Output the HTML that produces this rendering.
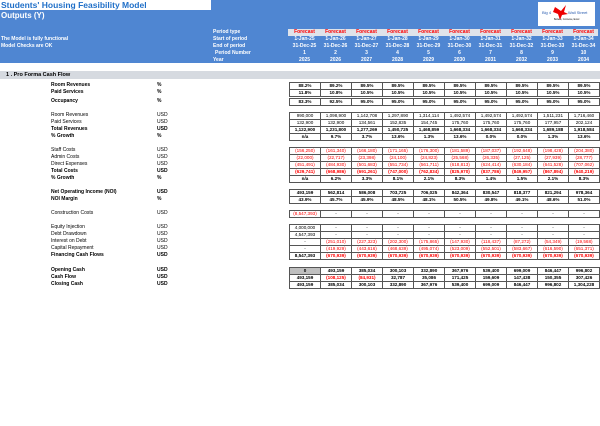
<!DOCTYPE html>
<html><head><meta charset="utf-8"><style>
*{margin:0;padding:0;box-sizing:border-box}
body{width:600px;height:426px;background:#fff;position:relative;overflow:hidden;font-family:"Liberation Sans",Arial,sans-serif;font-size:5px;color:#000}
.band{position:absolute;left:0;top:0;width:600px;height:63px;background:#4f86d2}
.t{position:absolute;white-space:nowrap}
.title{left:0;top:0;width:211px;height:10px;background:#fff;color:#1f6fc8;font-weight:bold;font-size:8.5px;line-height:10px;padding-left:1px}
.out{left:1px;top:11px;color:#fff;font-weight:bold;font-size:8px}
.w{color:#fff;font-weight:bold;font-size:5px;line-height:7px}
.fc{position:absolute;left:288px;top:29px;width:310px;height:7px;background:#dfe3ea}
.logo{position:absolute;left:538px;top:2px;width:57px;height:24px;background:#fff}
.bar{position:absolute;left:0;top:71px;width:600px;height:8px;background:#d6dae0;font-weight:bold;font-size:5.5px;line-height:8px;padding-left:6px}
.lb{position:absolute;left:51px;font-size:5px;line-height:7px}
.un{position:absolute;left:157px;font-size:5px;line-height:7px}
.b{font-weight:bold}
table{position:absolute;left:289px;border-collapse:collapse;border:1px solid #333}
td{width:31px;height:7px;border:0.6px solid #555;text-align:center;font-size:4.6px;line-height:6px;padding:0;font-weight:bold}
td.r{color:#f00}
tr.n td{font-weight:normal}
.hr{position:absolute;left:289px;display:flex;font-weight:bold;font-size:5px;line-height:7px;height:7px;color:#fff}
.hr span{width:31px;text-align:center;white-space:nowrap}
</style></head><body>
<div class="band"></div>
<div class="t title">Students' Housing Feasibility Model</div>
<div class="t out">Outputs (Y)</div>
<div class="t w" style="left:1px;top:36px">The Model is fully functional</div>
<div class="t w" style="left:1px;top:43px">Model Checks are OK</div>
<div class="t w" style="left:213px;top:29px">Period type</div>
<div class="t w" style="left:213px;top:36px">Start of period</div>
<div class="t w" style="left:213px;top:43px">End of period</div>
<div class="t w" style="left:215px;top:50px">Period Number</div>
<div class="t w" style="left:213px;top:57px">Year</div>
<div class="fc"></div>
<div class="logo"><svg width="57" height="24" viewBox="0 0 57 24"><text x="4" y="12" font-size="4" fill="#2a5db0" font-family="Liberation Sans">Big 4</text><path d="M17 5 L23 9 L28 3 L26 10 L30 12 L24 13 L22 18 L20 12 L15 10Z" fill="#e00"/><text x="30" y="12" font-size="4" fill="#2a5db0" font-family="Liberation Sans">Wall Street</text><text x="16" y="18" font-size="2.3" fill="#000" font-family="Liberation Sans">Believe, Conceive, Excel</text></svg></div>
<div class="hr" style="top:29px;color:#f00"><span>Forecast</span><span>Forecast</span><span>Forecast</span><span>Forecast</span><span>Forecast</span><span>Forecast</span><span>Forecast</span><span>Forecast</span><span>Forecast</span><span>Forecast</span></div>
<div class="hr" style="top:36px"><span>1-Jan-25</span><span>1-Jan-26</span><span>1-Jan-27</span><span>1-Jan-28</span><span>1-Jan-29</span><span>1-Jan-30</span><span>1-Jan-31</span><span>1-Jan-32</span><span>1-Jan-33</span><span>1-Jan-34</span></div>
<div class="hr" style="top:43px"><span>31-Dec-25</span><span>31-Dec-26</span><span>31-Dec-27</span><span>31-Dec-28</span><span>31-Dec-29</span><span>31-Dec-30</span><span>31-Dec-31</span><span>31-Dec-32</span><span>31-Dec-33</span><span>31-Dec-34</span></div>
<div class="hr" style="top:50px"><span>1</span><span>2</span><span>3</span><span>4</span><span>5</span><span>6</span><span>7</span><span>8</span><span>9</span><span>10</span></div>
<div class="hr" style="top:57px"><span>2025</span><span>2026</span><span>2027</span><span>2028</span><span>2029</span><span>2030</span><span>2031</span><span>2032</span><span>2033</span><span>2034</span></div>
<div class="bar">1 . Pro Forma Cash Flow</div>

<div class="lb b" style="top:82px">Room Revenues</div><div class="un b" style="top:82px">%</div>
<div class="lb b" style="top:89px">Paid Services</div><div class="un b" style="top:89px">%</div>
<div class="lb b" style="top:98px">Occupancy</div><div class="un b" style="top:98px">%</div>
<div class="lb" style="top:112px">Room Revenues</div><div class="un" style="top:112px">USD</div>
<div class="lb" style="top:119px">Paid Services</div><div class="un" style="top:119px">USD</div>
<div class="lb b" style="top:126px">Total Revenues</div><div class="un b" style="top:126px">USD</div>
<div class="lb b" style="top:133px">% Growth</div><div class="un b" style="top:133px">%</div>
<div class="lb" style="top:147px">Staff Costs</div><div class="un" style="top:147px">USD</div>
<div class="lb" style="top:154px">Admin Costs</div><div class="un" style="top:154px">USD</div>
<div class="lb" style="top:161px">Direct Expenses</div><div class="un" style="top:161px">USD</div>
<div class="lb b" style="top:168px">Total Costs</div><div class="un b" style="top:168px">USD</div>
<div class="lb b" style="top:175px">% Growth</div><div class="un b" style="top:175px">%</div>
<div class="lb b" style="top:189px">Net Operating Income (NOI)</div><div class="un b" style="top:189px">USD</div>
<div class="lb b" style="top:196px">NOI Margin</div><div class="un b" style="top:196px">%</div>
<div class="lb" style="top:210px">Construction Costs</div><div class="un" style="top:210px">USD</div>
<div class="lb" style="top:224px">Equity Injection</div><div class="un" style="top:224px">USD</div>
<div class="lb" style="top:231px">Debt Drawdown</div><div class="un" style="top:231px">USD</div>
<div class="lb" style="top:238px">Interest on Debt</div><div class="un" style="top:238px">USD</div>
<div class="lb" style="top:245px">Capital Repayment</div><div class="un" style="top:245px">USD</div>
<div class="lb b" style="top:252px">Financing Cash Flows</div><div class="un b" style="top:252px">USD</div>
<div class="lb b" style="top:267px">Opening Cash</div><div class="un b" style="top:267px">USD</div>
<div class="lb b" style="top:274px">Cash Flow</div><div class="un b" style="top:274px">USD</div>
<div class="lb b" style="top:281px">Closing Cash</div><div class="un b" style="top:281px">USD</div>

<table style="top:82px">
<tr><td>88.2%</td><td>89.2%</td><td>89.5%</td><td>89.5%</td><td>89.5%</td><td>89.5%</td><td>89.5%</td><td>89.5%</td><td>89.5%</td><td>89.5%</td></tr>
<tr><td>11.8%</td><td>10.8%</td><td>10.5%</td><td>10.5%</td><td>10.5%</td><td>10.5%</td><td>10.5%</td><td>10.5%</td><td>10.5%</td><td>10.5%</td></tr>
</table>
<table style="top:98px">
<tr><td>83.3%</td><td>92.5%</td><td>95.0%</td><td>95.0%</td><td>95.0%</td><td>95.0%</td><td>95.0%</td><td>95.0%</td><td>95.0%</td><td>95.0%</td></tr>
</table>
<table style="top:112px">
<tr class="n"><td>990,000</td><td>1,098,900</td><td>1,142,708</td><td>1,297,890</td><td>1,314,114</td><td>1,492,574</td><td>1,492,574</td><td>1,492,574</td><td>1,511,231</td><td>1,716,460</td></tr>
<tr class="n"><td>132,900</td><td>132,900</td><td>134,561</td><td>152,835</td><td>154,745</td><td>175,760</td><td>175,760</td><td>175,760</td><td>177,957</td><td>202,124</td></tr>
<tr><td>1,122,900</td><td>1,231,800</td><td>1,277,269</td><td>1,450,725</td><td>1,468,859</td><td>1,668,334</td><td>1,668,334</td><td>1,668,334</td><td>1,689,188</td><td>1,918,584</td></tr>
<tr><td>n/a</td><td>9.7%</td><td>3.7%</td><td>13.6%</td><td>1.3%</td><td>13.6%</td><td>0.0%</td><td>0.0%</td><td>1.3%</td><td>13.6%</td></tr>
</table>
<table style="top:147px">
<tr class="n"><td class="r">(156,250)</td><td class="r">(161,340)</td><td class="r">(166,180)</td><td class="r">(171,165)</td><td class="r">(176,300)</td><td class="r">(181,589)</td><td class="r">(187,037)</td><td class="r">(192,648)</td><td class="r">(198,428)</td><td class="r">(204,380)</td></tr>
<tr class="n"><td class="r">(22,000)</td><td class="r">(22,717)</td><td class="r">(23,398)</td><td class="r">(24,100)</td><td class="r">(24,823)</td><td class="r">(25,568)</td><td class="r">(26,335)</td><td class="r">(27,125)</td><td class="r">(27,939)</td><td class="r">(28,777)</td></tr>
<tr class="n"><td class="r">(451,491)</td><td class="r">(484,930)</td><td class="r">(501,683)</td><td class="r">(551,734)</td><td class="r">(561,711)</td><td class="r">(618,813)</td><td class="r">(624,414)</td><td class="r">(630,184)</td><td class="r">(641,528)</td><td class="r">(707,062)</td></tr>
<tr><td class="r">(629,741)</td><td class="r">(668,986)</td><td class="r">(691,261)</td><td class="r">(747,000)</td><td class="r">(762,834)</td><td class="r">(825,970)</td><td class="r">(837,786)</td><td class="r">(849,957)</td><td class="r">(867,894)</td><td class="r">(940,219)</td></tr>
<tr><td>n/a</td><td>6.2%</td><td>3.3%</td><td>8.1%</td><td>2.1%</td><td>8.3%</td><td>1.4%</td><td>1.5%</td><td>2.1%</td><td>8.3%</td></tr>
</table>
<table style="top:189px">
<tr><td>493,159</td><td>562,814</td><td>586,008</td><td>703,725</td><td>706,025</td><td>842,364</td><td>830,547</td><td>818,377</td><td>821,294</td><td>978,364</td></tr>
<tr><td>43.9%</td><td>45.7%</td><td>45.9%</td><td>48.5%</td><td>48.1%</td><td>50.5%</td><td>49.8%</td><td>49.1%</td><td>48.6%</td><td>51.0%</td></tr>
</table>
<table style="top:210px">
<tr class="n"><td class="r">(8,547,393)</td><td>-</td><td>-</td><td>-</td><td>-</td><td>-</td><td>-</td><td>-</td><td>-</td><td>-</td></tr>
</table>
<table style="top:224px">
<tr class="n"><td>4,000,000</td><td>-</td><td>-</td><td>-</td><td>-</td><td>-</td><td>-</td><td>-</td><td>-</td><td>-</td></tr>
<tr class="n"><td>4,547,393</td><td>-</td><td>-</td><td>-</td><td>-</td><td>-</td><td>-</td><td>-</td><td>-</td><td>-</td></tr>
<tr class="n"><td>-</td><td class="r">(251,010)</td><td class="r">(227,323)</td><td class="r">(202,300)</td><td class="r">(175,865)</td><td class="r">(147,930)</td><td class="r">(118,437)</td><td class="r">(87,272)</td><td class="r">(54,349)</td><td class="r">(19,568)</td></tr>
<tr class="n"><td>-</td><td class="r">(419,929)</td><td class="r">(443,616)</td><td class="r">(468,639)</td><td class="r">(495,074)</td><td class="r">(523,009)</td><td class="r">(552,501)</td><td class="r">(583,667)</td><td class="r">(616,590)</td><td class="r">(651,371)</td></tr>
<tr><td>8,547,393</td><td class="r">(670,939)</td><td class="r">(670,939)</td><td class="r">(670,939)</td><td class="r">(670,939)</td><td class="r">(670,939)</td><td class="r">(670,939)</td><td class="r">(670,939)</td><td class="r">(670,939)</td><td class="r">(670,939)</td></tr>
</table>
<table style="top:267px">
<tr><td style="background:#bfbfbf">0</td><td>493,159</td><td>385,034</td><td>300,103</td><td>332,890</td><td>367,976</td><td>539,400</td><td>699,009</td><td>846,447</td><td>996,802</td></tr>
<tr><td>493,159</td><td class="r">(108,125)</td><td class="r">(84,931)</td><td>32,787</td><td>35,086</td><td>171,425</td><td>159,609</td><td>147,438</td><td>150,355</td><td>307,426</td></tr>
<tr><td>493,159</td><td>385,034</td><td>300,103</td><td>332,890</td><td>367,976</td><td>539,400</td><td>699,009</td><td>846,447</td><td>996,802</td><td>1,304,228</td></tr>
</table>
</body></html>
